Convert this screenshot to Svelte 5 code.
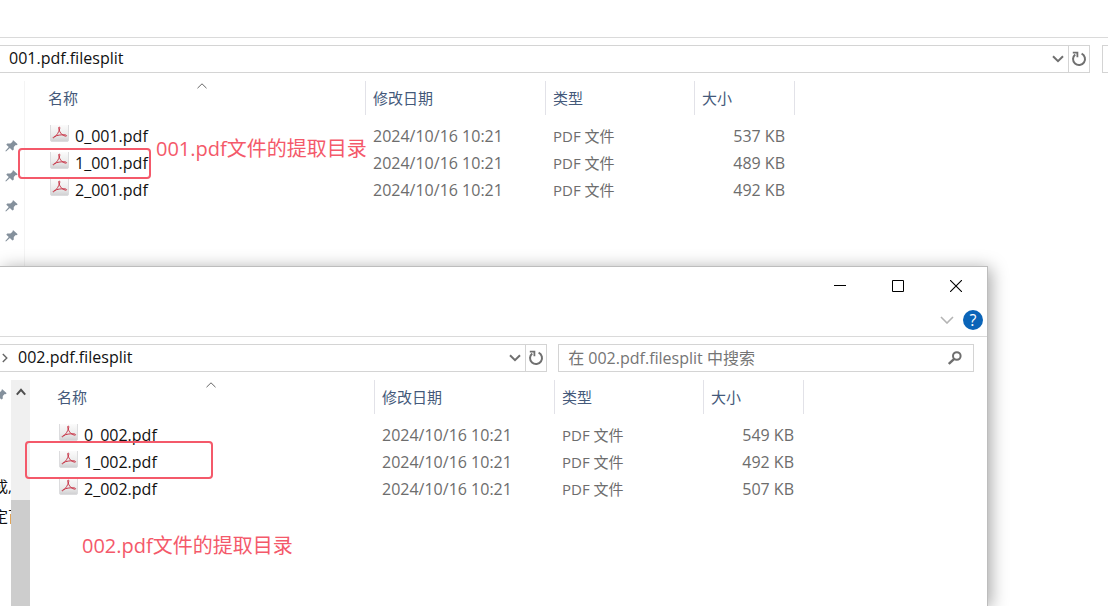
<script lang="ts">
  type FileRow = { name: string; date: string; type: string; size: string };

  const stamp = '2024/10/16 10:21';
  const firstFiles: FileRow[] = [
    { name: '0_001.pdf', date: stamp, type: 'PDF 文件', size: '537 KB' },
    { name: '1_001.pdf', date: stamp, type: 'PDF 文件', size: '489 KB' },
    { name: '2_001.pdf', date: stamp, type: 'PDF 文件', size: '492 KB' },
  ];
  const secondFiles: FileRow[] = [
    { name: '0_002.pdf', date: stamp, type: 'PDF 文件', size: '549 KB' },
    { name: '1_002.pdf', date: stamp, type: 'PDF 文件', size: '492 KB' },
    { name: '2_002.pdf', date: stamp, type: 'PDF 文件', size: '507 KB' },
  ];

  let query = $state('');
</script>

{#snippet pin()}
  <svg class="pin" width="13" height="12" viewBox="0 0 13 12" aria-hidden="true">
    <path d="M8.3 0.3 12.7 4.3 11.5 5.2 10.7 4.9 8.8 6.9 8.7 9.8 7.4 10.6 4.9 8.1 1 11.6 0.3 11 3.8 7 1.3 4.8 2.2 3.6 5.4 3.6 7.6 1.8 7.4 1Z" fill="#84909c" />
  </svg>
{/snippet}

{#snippet pdfIcon()}
  <svg class="pdf" width="19" height="17" viewBox="0 0 19 17" aria-hidden="true">
    <defs>
      <linearGradient id="sheet" x1="0" y1="0" x2="0" y2="1">
        <stop offset="0" stop-color="#fbfbfb" />
        <stop offset="0.6" stop-color="#ebebeb" />
        <stop offset="1" stop-color="#cfcfd1" />
      </linearGradient>
    </defs>
    <path d="M0.5 0V15Q0.5 16.5 2 16.5H17Q18.5 16.5 18.5 15V0" fill="url(#sheet)" stroke="#dcdcde" />
    <path
      d="M9.2 2C8.2 2 8.9 4.8 9.6 6.2 10.7 8.6 12.8 10.9 15.9 11.2 17.2 11.2 16.6 9.9 14.9 9.8 11 9.6 7 10.2 4.2 11.6 2.6 12.6 3.1 13.4 4.3 12.4 6.6 10.4 8.9 7.2 9.7 3.8 9.9 2.6 9.7 2 9.2 2Z"
      fill="none" stroke="#c8384a" />
  </svg>
{/snippet}

{#snippet chevron()}
  <svg width="12" height="8" viewBox="0 0 12 8" aria-hidden="true">
    <path d="M1 1.2 6 6.2 11 1.2" fill="none" stroke="currentColor" stroke-width="2" />
  </svg>
{/snippet}

{#snippet refresh()}
  <svg width="16" height="16" viewBox="0 0 16 16" aria-hidden="true">
    <path d="M10.6 2.6A6 6 0 1 1 4.2 3.4" fill="none" stroke="#707070" stroke-width="2" />
    <path d="M1.8 1.6H6.4V6.2" fill="none" stroke="#707070" stroke-width="1.8" />
  </svg>
{/snippet}

{#snippet fileTable(files: FileRow[])}
  <table class="files">
    <thead>
      <tr>
        <th class="name">
          名称
          <svg class="sort" width="10" height="6" viewBox="0 0 10 6" aria-hidden="true">
            <path d="M0.5 5.2 5 0.8 9.5 5.2" fill="none" stroke="#666" />
          </svg>
        </th>
        <th class="date">修改日期</th>
        <th class="type">类型</th>
        <th class="size">大小</th>
      </tr>
    </thead>
    <tbody>
      {#each files as file}
        <tr>
          <td class="name"><span class="file">{@render pdfIcon()}{file.name}</span></td>
          <td class="date">{file.date}</td>
          <td>{file.type}</td>
          <td class="size">{file.size}</td>
        </tr>
      {/each}
    </tbody>
  </table>
{/snippet}

<main class="desktop">
  <section class="explorer">
    <div class="ribbon"></div>
    <div class="toolbar">
      <div class="address">
        <span class="path">001.pdf.filesplit</span>
        <button class="drop" aria-label="历史记录">{@render chevron()}</button>
        <button class="reload" aria-label="刷新">{@render refresh()}</button>
      </div>
      <div class="search-edge"></div>
    </div>
    <div class="body">
      <nav class="pins">
        {@render pin()}
        {@render pin()}
        {@render pin()}
        {@render pin()}
      </nav>
      <div class="pane">
        {@render fileTable(firstFiles)}
      </div>
    </div>
    <div class="mark first"></div>
    <p class="note first">001.pdf文件的提取目录</p>
  </section>

  <section class="explorer front">
    <header class="titlebar">
      <button aria-label="最小化">
        <svg width="12" height="12" viewBox="0 0 12 12"><path d="M0 5.5H12" stroke="#000" /></svg>
      </button>
      <button aria-label="最大化">
        <svg width="12" height="12" viewBox="0 0 12 12"><path d="M0.5 0.5H11.5V11.5H0.5Z" fill="none" stroke="#000" /></svg>
      </button>
      <button aria-label="关闭">
        <svg width="12" height="12" viewBox="0 0 12 12"><path d="M0 0 12 12M12 0 0 12" stroke="#000" stroke-width="1.1" /></svg>
      </button>
    </header>
    <div class="ribbon-tabs">
      <button class="expand" aria-label="展开功能区">
        <svg width="14" height="8" viewBox="0 0 14 8"><path d="M1 1 7 7 13 1" fill="none" stroke="#b4b4b4" stroke-width="1.6" /></svg>
      </button>
      <button class="help" aria-label="帮助">?</button>
    </div>
    <div class="toolbar">
      <div class="address">
        <svg class="crumb" width="6" height="10" viewBox="0 0 6 10" aria-hidden="true">
          <path d="M0.8 1 4.8 5 0.8 9" fill="none" stroke="#666" stroke-width="1.4" />
        </svg>
        <span class="path">002.pdf.filesplit</span>
        <button class="drop" aria-label="历史记录">{@render chevron()}</button>
        <button class="reload" aria-label="刷新">{@render refresh()}</button>
      </div>
      <label class="search">
        <input type="text" placeholder="在 002.pdf.filesplit 中搜索" aria-label="搜索" bind:value={query} />
        <svg width="14" height="14" viewBox="0 0 14 14" aria-hidden="true">
          <circle cx="8.8" cy="5" r="3.8" fill="none" stroke="#6e6e6e" stroke-width="2" />
          <path d="M6.2 7.8 0.8 13" stroke="#6e6e6e" stroke-width="2.4" />
        </svg>
      </label>
    </div>
    <div class="body">
      <nav class="tree">
        {@render pin()}
        <span class="folder">成,</span>
        <span class="folder">定百</span>
      </nav>
      <div class="scrollbar">
        <svg width="10" height="8" viewBox="0 0 10 8" aria-hidden="true">
          <path d="M0.8 6.6 5 1.8 9.2 6.6" fill="none" stroke="#505050" stroke-width="2" />
        </svg>
        <div class="thumb"></div>
      </div>
      <div class="pane">
        {@render fileTable(secondFiles)}
      </div>
    </div>
    <div class="mark second"></div>
    <p class="note second">002.pdf文件的提取目录</p>
  </section>
</main>

<style>
  :global(body) {
    background: #fff;
  }
  .desktop {
    position: relative;
    min-height: 100vh;
    overflow: hidden;
    font-family: "Open Sans", "Noto Sans CJK SC", sans-serif;
    font-size: 15px;
    line-height: 20px;
    color: #111;
  }
  .explorer {
    display: flex;
    flex-direction: column;
    background: #fff;
  }
  .front {
    position: absolute;
    top: 266px;
    left: 0;
    right: 120px;
    bottom: 0;
    border-top: 1px solid #bdbdbd;
    border-right: 1px solid #bdbdbd;
    box-shadow: 3px 2px 16px rgba(0, 0, 0, 0.35);
  }
  button {
    display: flex;
    align-items: center;
    justify-content: center;
    padding: 0;
    border: 0;
    background: none;
    font: inherit;
    color: #707070;
  }
  .ribbon {
    height: 37px;
    border-bottom: 1px solid #dadada;
  }
  .titlebar {
    display: flex;
    justify-content: flex-end;
    height: 38px;
    padding-right: 2px;
  }
  .titlebar button {
    width: 58px;
  }
  .ribbon-tabs {
    display: flex;
    align-items: center;
    justify-content: flex-end;
    gap: 9px;
    height: 29px;
    padding: 0 4px 2px 0;
    border-bottom: 1px solid #dadada;
  }
  .help {
    width: 20px;
    height: 20px;
    border-radius: 50%;
    background: #0a64b8;
    color: #fff;
    font-size: 16px;
  }
  .toolbar {
    display: grid;
    grid-template-columns: 1fr auto;
    gap: 12px;
    padding-top: 7px;
  }
  .front .toolbar {
    grid-template-columns: 25fr 19fr;
    gap: 11px;
    padding-right: 13px;
  }
  .address {
    display: flex;
    height: 26px;
    border: 1px solid #d4d4d4;
    border-left: 0;
  }
  .path {
    flex: 1;
    padding-left: 9px;
    font-size: 16px;
    line-height: 24px;
  }
  .crumb {
    align-self: center;
    margin-left: 2px;
  }
  .front .path {
    padding-left: 10px;
  }
  .drop {
    width: 20px;
  }
  .reload {
    width: 21px;
    border-left: 1px solid #d4d4d4;
  }
  .search-edge {
    width: 5px;
    border: 1px solid #d4d4d4;
    border-right: 0;
  }
  .search {
    display: flex;
    align-items: center;
    box-sizing: border-box;
    padding: 0 11px 0 9px;
    border: 1px solid #d4d4d4;
  }
  .search input {
    flex: 1;
    min-width: 0;
    height: 24px;
    padding: 0;
    border: 0;
    outline: 0;
    background: none;
    font: inherit;
    font-size: 16px;
    color: #111;
  }
  .search input::placeholder {
    color: #757575;
    opacity: 1;
  }
  .body {
    display: flex;
    flex: 1;
    min-height: 0;
    padding-top: 8px;
  }
  .pins {
    display: flex;
    flex-direction: column;
    gap: 18px;
    width: 25px;
    box-sizing: border-box;
    min-height: 186px;
    padding: 59px 0 0 5px;
    border-right: 1px solid #f4f4f4;
  }
  .pin {
    flex-shrink: 0;
  }
  .pins + .pane {
    padding-left: 16px;
  }
  .tree {
    display: flex;
    flex-direction: column;
    width: 11px;
    padding-top: 9px;
    overflow: hidden;
  }
  .tree .pin {
    margin: 0 0 70px -6px;
  }
  .folder {
    margin-left: -7px;
    white-space: nowrap;
    line-height: 30px;
  }
  .scrollbar {
    display: flex;
    flex-direction: column;
    align-items: center;
    width: 19px;
    background: #f0f0f0;
  }
  .scrollbar svg {
    margin: 8px 0 104px;
  }
  .thumb {
    align-self: stretch;
    flex: 1;
    background: #cdcdcd;
  }
  .scrollbar + .pane {
    padding-left: 20px;
  }
  .files {
    border-collapse: separate;
    border-spacing: 0;
    table-layout: fixed;
    width: 754px;
  }
  th {
    position: relative;
    height: 34px;
    padding: 0 0 0 7px;
    border-right: 1px solid #e2e2e8;
    text-align: left;
    font-weight: 400;
    color: #44597a;
  }
  thead .name {
    width: 317px;
  }
  thead .date {
    width: 172px;
  }
  thead .type {
    width: 141px;
  }
  tbody::before {
    content: "";
    display: block;
    height: 7px;
  }
  td {
    height: 27px;
    padding: 0 0 0 7px;
    color: #6d6d6d;
  }
  td.name {
    padding-left: 9px;
    font-size: 16px;
    color: #111;
  }
  td.date {
    font-size: 16px;
  }
  td.size {
    padding-right: 10px;
    font-size: 16px;
    text-align: right;
  }
  .file {
    display: flex;
    align-items: center;
    gap: 6px;
  }
  .pdf {
    margin-bottom: 4px;
  }
  .sort {
    position: absolute;
    top: 2px;
    left: 50%;
    margin-left: -6px;
  }
  .mark {
    position: absolute;
    box-sizing: border-box;
    border: 2px solid #f4596a;
    border-radius: 4px;
  }
  .mark.first {
    top: 148px;
    left: 18px;
    width: 133px;
    height: 31px;
  }
  .mark.second {
    top: 174px;
    left: 25px;
    width: 188px;
    height: 38px;
  }
  .note {
    position: absolute;
    margin: 0;
    font-size: 20px;
    line-height: 28px;
    color: #f4596a;
  }
  .note.first {
    top: 135px;
    left: 156px;
  }
  .note.second {
    top: 265px;
    left: 82px;
  }
</style>
